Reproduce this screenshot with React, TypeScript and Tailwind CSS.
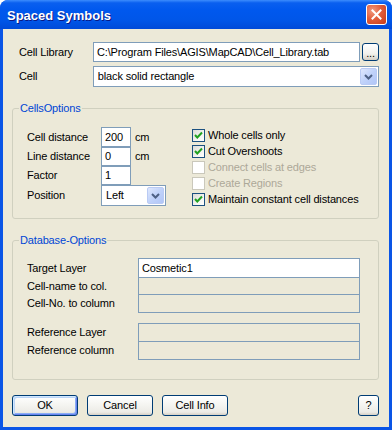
import React from "react";

const Field = ({ value, className = "", disabled = false }: { value?: string; className?: string; disabled?: boolean }) => (
  <div className={`flex items-center overflow-hidden whitespace-nowrap border border-[#7f9db9] pl-[3px] ${disabled ? "bg-[#ece9d8]" : "bg-white"} ${className}`}>
    {value}
  </div>
);

const Combo = ({ value, className = "" }: { value: string; className?: string }) => (
  <div className={`flex items-center border border-[#7f9db9] bg-white pl-[4px] ${className}`}>
    <span className="flex-1 whitespace-nowrap">{value}</span>
    <div className="mr-px flex h-[17px] w-[17px] items-center justify-center rounded-[2px] border border-[#bacbf4] bg-[linear-gradient(135deg,#dfe8fd_0%,#c0d2fa_50%,#b1c6f7_100%)]">
      <svg width="9" height="6" viewBox="0 0 9 6">
        <path d="M1 1 L4.5 4.5 L8 1" fill="none" stroke="#4d6185" strokeWidth="2" />
      </svg>
    </div>
  </div>
);

const Check = ({ label, checked = false, disabled = false }: { label: string; checked?: boolean; disabled?: boolean }) => (
  <div className="flex h-[16px] items-center">
    <div className={`flex h-[13px] w-[13px] items-center justify-center border ${disabled ? "border-[#cac8bb] bg-white" : "border-[#1c5180] bg-[linear-gradient(135deg,#dcdcd7_0%,#f4f4f1_60%,#ffffff_100%)]"}`}>
      {checked && (
        <svg width="9" height="9" viewBox="0 0 9 9">
          <path d="M1 4 L3.3 6.5 L8 1.5" fill="none" stroke="#21a121" strokeWidth="2" />
        </svg>
      )}
    </div>
    <span className={`ml-[3px] whitespace-nowrap ${disabled ? "text-[#aca899]" : "text-black"}`}>{label}</span>
  </div>
);

const Btn = ({ label, className = "", isDefault = false }: { label: string; className?: string; isDefault?: boolean }) => (
  <div
    className={`flex h-[21px] items-center justify-center rounded-[3px] border border-[#003c74] bg-[linear-gradient(180deg,#ffffff_0%,#f4f4f0_50%,#ecebe6_85%,#d6d0c5_100%)] ${
      isDefault ? "shadow-[inset_1px_1px_0_#cee7ff,inset_-1px_-1px_0_#6982ee,inset_2px_2px_0_#bcd4f6,inset_-2px_-2px_0_#89adf4]" : ""
    } ${className}`}
  >
    {label}
  </div>
);

export default function App() {
  return (
    <div className="flex h-[430px] w-[392px] flex-col overflow-hidden rounded-t-[8px] bg-[#0a55e6] font-['Liberation_Sans',Arial,sans-serif] text-[11px] leading-[13px] tracking-[-0.15px] text-black">
      <div className="flex h-[29px] shrink-0 items-center bg-[linear-gradient(180deg,#3c8cfd_0%,#0a5fef_10%,#0058ee_35%,#0056e8_70%,#004ad8_100%)] pl-[7px] pr-[5px]">
        <span className="flex-1 pt-px text-[13px] font-bold tracking-normal text-white [text-shadow:1px_1px_0_#0a1883]">Spaced Symbols</span>
        <div className="flex h-[21px] w-[21px] items-center justify-center rounded-[3px] border border-white bg-[radial-gradient(circle_at_30%_30%,#f09a80_0%,#e25e3c_45%,#c63a17_100%)]">
          <svg width="11" height="11" viewBox="0 0 11 11">
            <path d="M1.5 1.5 L9.5 9.5 M9.5 1.5 L1.5 9.5" stroke="white" strokeWidth="2" strokeLinecap="square" />
          </svg>
        </div>
      </div>

      <div className="mx-[3px] mb-[3px] flex flex-1 flex-col bg-[#ece9d8] pl-[9px] pr-[10px]">
        <div className="mt-[13px] flex items-center pl-[7px]">
          <span className="w-[74px]">Cell Library</span>
          <Field className="h-[20px] w-[267px]" value="C:\Program Files\AGIS\MapCAD\Cell_Library.tab" />
          <div className="ml-[2px] flex h-[18px] w-[17px] items-end justify-center rounded-[3px] border border-[#003c74] bg-[linear-gradient(180deg,#ffffff_0%,#f2f1ec_60%,#d6d0c5_100%)] pb-[3px] leading-[8px]">...</div>
        </div>
        <div className="mt-[4px] flex items-center pl-[7px]">
          <span className="w-[74px]">Cell</span>
          <Combo className="h-[21px] w-[287px]" value="black solid rectangle" />
        </div>

        <fieldset className="mt-[15px] rounded-[3px] border border-[#d0d0bf] pb-[11px] pl-[14px] pt-[12px]">
          <legend className="-ml-[8px] px-[1px] text-[#0046d5]">CellsOptions</legend>
          <div className="flex">
            <div className="flex w-[165px] flex-col">
              <div className="flex h-[20px] items-center">
                <span className="w-[74px]">Cell distance</span>
                <Field className="h-[20px] w-[30px]" value="200" />
                <span className="ml-[4px]">cm</span>
              </div>
              <div className="flex h-[19px] items-center">
                <span className="w-[74px]">Line distance</span>
                <Field className="h-[19px] w-[30px]" value="0" />
                <span className="ml-[4px]">cm</span>
              </div>
              <div className="flex h-[19px] items-center">
                <span className="w-[74px]">Factor</span>
                <Field className="h-[19px] w-[30px]" value="1" />
              </div>
              <div className="flex h-[21px] items-center">
                <span className="w-[74px]">Position</span>
                <Combo className="h-[21px] w-[65px]" value="Left" />
              </div>
            </div>
            <div className="flex flex-col">
              <Check label="Whole cells only" checked />
              <Check label="Cut Overshoots" checked />
              <Check label="Connect cells at edges" disabled />
              <Check label="Create Regions" disabled />
              <Check label="Maintain constant cell distances" checked />
            </div>
          </div>
        </fieldset>

        <fieldset className="mt-[15px] rounded-[3px] border border-[#d0d0bf] pb-[19px] pl-[14px] pt-[11px]">
          <legend className="-ml-[8px] px-[1px] text-[#0046d5]">Database-Options</legend>
          <div className="flex items-center">
            <span className="w-[111px]">Target Layer</span>
            <Field className="h-[20px] w-[222px]" value="Cosmetic1" />
          </div>
          <div className="-mt-px flex items-center">
            <span className="w-[111px]">Cell-name to col.</span>
            <Field className="h-[18px] w-[222px]" disabled />
          </div>
          <div className="-mt-px flex items-center">
            <span className="w-[111px]">Cell-No. to column</span>
            <Field className="h-[19px] w-[222px]" disabled />
          </div>
          <div className="mt-[10px] flex items-center">
            <span className="w-[111px]">Reference Layer</span>
            <Field className="h-[19px] w-[222px]" disabled />
          </div>
          <div className="-mt-px flex items-center">
            <span className="w-[111px]">Reference column</span>
            <Field className="h-[19px] w-[222px]" disabled />
          </div>
        </fieldset>

        <div className="mt-[15px] flex items-center">
          <Btn label="OK" className="w-[66px]" isDefault />
          <Btn label="Cancel" className="ml-[9px] w-[66px]" />
          <Btn label="Cell Info" className="ml-[9px] w-[66px]" />
          <div className="flex-1" />
          <Btn label="?" className="w-[21px]" />
        </div>
      </div>
    </div>
  );
}
